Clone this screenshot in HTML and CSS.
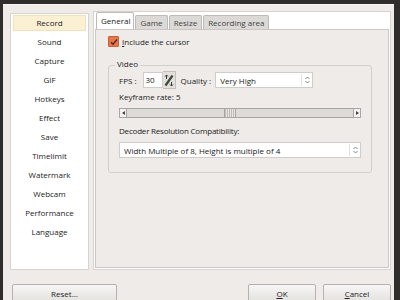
FILE: index.html
```html
<!doctype html>
<html>
  <head>
    <title>Options</title>
    <link rel="stylesheet" href="styles.css">
  </head>
  <body>
    <div class="dialog">
      <div class="main">
        <ul class="nav">
          <li class="active">Record</li>
          <li>Sound</li>
          <li>Capture</li>
          <li>GIF</li>
          <li>Hotkeys</li>
          <li>Effect</li>
          <li>Save</li>
          <li>Timelimit</li>
          <li>Watermark</li>
          <li>Webcam</li>
          <li>Performance</li>
          <li>Language</li>
        </ul>

        <div class="panel">
          <div class="tabs">
            <span class="tab active">General</span>
            <span class="tab">Game</span>
            <span class="tab">Resize</span>
            <span class="tab">Recording area</span>
          </div>
          <div class="pane">
            <label class="check">
              <span class="box">
                <svg width="8" height="8" viewBox="0 0 8 8"><path d="M1 4.2 L3 6.2 L7 1.5" fill="none" stroke="#4a2a1a" stroke-width="1.3"/></svg>
              </span>
              <span><u>I</u>nclude the cursor</span>
            </label>

            <div class="group">
              <span class="group-title">Video</span>
              <div class="row">
                <span>FPS :</span>
                <span class="field fps">30</span>
                <span class="spin">
                  <svg width="12" height="15" viewBox="0 0 12 15">
                    <path d="M2.5 12.5 L9.5 2.5" stroke="#3d4a3a" stroke-width="2.2"/>
                    <path d="M3.5 2 L3.5 6 M2 3.5 L3.5 2 L5 3.5" fill="none" stroke="#222" stroke-width="0.9"/>
                    <path d="M8.5 9 L8.5 13 M7 11.5 L8.5 13 L10 11.5" fill="none" stroke="#222" stroke-width="0.9"/>
                  </svg>
                </span>
                <span class="quality-label">Quality :</span>
                <span class="select quality">
                  <span class="value">Very High</span>
                  <span class="arrows">
                    <svg width="5" height="8" viewBox="0 0 5 8"><path d="M0.5 3 L2.5 1 L4.5 3 M0.5 5 L2.5 7 L4.5 5" fill="none" stroke="#777" stroke-width="0.9"/></svg>
                  </span>
                </span>
              </div>
              <div class="label keyframe">Keyframe rate: 5</div>
              <div class="slider">
                <span class="step">
                  <svg width="3" height="4" viewBox="0 0 3 4"><path d="M3 0 L0 2 L3 4 Z" fill="#444"/></svg>
                </span>
                <span class="track left"></span>
                <span class="thumb"></span>
                <span class="track"></span>
                <span class="step">
                  <svg width="3" height="4" viewBox="0 0 3 4"><path d="M0 0 L3 2 L0 4 Z" fill="#444"/></svg>
                </span>
              </div>
              <div class="label decoder">Decoder Resolution Compatibility:</div>
              <span class="select wide">
                <span class="value">Width Multiple of 8, Height is multiple of 4</span>
                <span class="arrows">
                  <svg width="5" height="8" viewBox="0 0 5 8"><path d="M0.5 3 L2.5 1 L4.5 3 M0.5 5 L2.5 7 L4.5 5" fill="none" stroke="#777" stroke-width="0.9"/></svg>
                </span>
              </span>
            </div>
          </div>
        </div>
      </div>

      <div class="buttons">
        <button class="btn reset">Reset...</button>
        <span class="spacer"></span>
        <button class="btn"><u>O</u>K</button>
        <button class="btn"><u>C</u>ancel</button>
      </div>
    </div>
  </body>
</html>
```

FILE: styles.css
```css
body {
  margin: 0;
  height: 300px;
  overflow: hidden;
  background-color: #2e2d2c;
  font-family: "Open Sans", "DejaVu Sans", sans-serif;
  font-size: 8px;
  color: #222;
}

.dialog {
  margin: 4px 6px 0 3px;
  height: 296px;
  padding: 6px 3px 0 7px;
  box-sizing: border-box;
  background-color: #eeebe8;
  border-top: 1px solid #f8f7f6;
}

.main {
  display: flex;
  gap: 4px;
  height: 259px;
}

/* left category list */
.nav {
  list-style: none;
  margin: 2px 0 0 0;
  padding: 1px 2px;
  width: 79px;
  box-sizing: border-box;
  background-color: #fff;
  border: 1px solid #d6d3d0;
}

.nav li {
  height: 16px;
  line-height: 16px;
  margin-bottom: 3px;
  text-align: center;
  color: #222;
}

.nav li.active {
  background-color: #fcf0d4;
  border: 1px solid #f1e2bd;
  line-height: 14px;
  height: 14px;
}

/* right tab panel */
.panel {
  flex: 1;
  display: flex;
  flex-direction: column;
  background-color: #fff;
  border: 1px solid #d6d3d0;
}

.tabs {
  display: flex;
  align-items: flex-end;
  height: 17px;
  padding-left: 2px;
}

.tab {
  height: 13px;
  line-height: 13px;
  padding: 0 4px;
  margin-right: 1px;
  background-color: #dcdad7;
  border: 1px solid #bdbab7;
  border-bottom: none;
  border-radius: 2px 2px 0 0;
  color: #444;
}

.tab.active {
  height: 16px;
  line-height: 15px;
  padding: 0 3px 0 4px;
  background-color: #fff;
  color: #222;
}

.pane {
  flex: 1;
  margin: 0 1px 1px 1px;
  padding: 6px 16px 0 12px;
  background-color: #eeebe8;
  border: 1px solid #c9c6c3;
}

.check {
  display: flex;
  align-items: center;
  gap: 3px;
  height: 11px;
}

.check .box {
  display: flex;
  align-items: center;
  justify-content: center;
  width: 9px;
  height: 9px;
  background-color: #e8764a;
  border: 1px solid #c8603a;
  border-radius: 1px;
}

.group {
  position: relative;
  margin-top: 18px;
  padding: 6px 10px 14px 10px;
  border: 1px solid #d2cfcc;
  border-radius: 3px;
}

.group-title {
  position: absolute;
  top: -8px;
  left: 6px;
  padding: 0 2px;
  background-color: #eeebe8;
}

.row {
  display: flex;
  align-items: center;
  height: 16px;
}

.field {
  height: 14px;
  line-height: 14px;
  background-color: #fff;
  border: 1px solid #cfccc9;
  box-sizing: content-box;
}

.fps {
  width: 16px;
  margin-left: 6px;
  padding-left: 2px;
}

.spin {
  display: flex;
  align-items: center;
  justify-content: center;
  width: 12px;
  height: 16px;
  background-color: #e2e0dd;
  border: 1px solid #c2bfbc;
  border-left: none;
}

.quality-label {
  margin-left: 5px;
}

.select {
  display: flex;
  align-items: center;
  height: 14px;
  background-color: #fff;
  border: 1px solid #cfccc9;
}

.select .value {
  flex: 1;
  padding-left: 4px;
  white-space: nowrap;
  overflow: hidden;
}

.select .arrows {
  display: flex;
  align-items: center;
  justify-content: center;
  width: 10px;
  height: 12px;
  border-left: 1px solid #e2e0dd;
}

.quality {
  width: 96px;
  margin-left: 4px;
}

.label {
  height: 12px;
  line-height: 12px;
}

.keyframe {
  margin-top: 3px;
}

.slider {
  display: flex;
  height: 10px;
  margin-top: 5px;
  border: 1px solid #a8a6a3;
  box-sizing: border-box;
  background-color: #dddbd8;
}

.step {
  display: flex;
  align-items: center;
  justify-content: center;
  width: 6px;
  background-color: #f4f3f2;
  border-right: 1px solid #a8a6a3;
}

.step:last-child {
  border-right: none;
  border-left: 1px solid #a8a6a3;
}

.track {
  flex: 1;
}

.track.left {
  flex: 0 0 97px;
}

.thumb {
  width: 10px;
  background: repeating-linear-gradient(90deg, #bdbab7 0 1px, #e9e7e4 1px 2px);
  border-left: 1px solid #a8a6a3;
  border-right: 1px solid #a8a6a3;
}

.decoder {
  margin-top: 7px;
  letter-spacing: -0.2px;
}

.wide {
  margin-top: 5px;
  width: 240px;
}

.buttons {
  display: flex;
  margin-top: 14px;
  gap: 7px;
}

.spacer {
  flex: 1;
}

.btn {
  height: 19px;
  width: 68px;
  padding: 0;
  font-family: "Open Sans", "DejaVu Sans", sans-serif;
  font-size: 8px;
  color: #222;
  background: linear-gradient(180deg, #f7f6f5 0%, #e3e1de 100%);
  border: 1px solid #b4b1ae;
  border-radius: 2px;
}

.btn.reset {
  width: 105px;
  margin-left: 2px;
}
```
